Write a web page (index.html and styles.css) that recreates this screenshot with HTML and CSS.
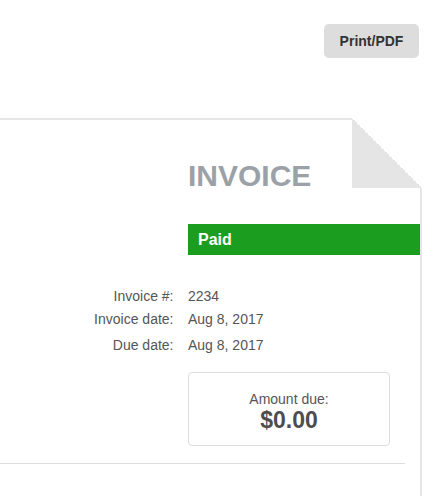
FILE: index.html
```html
<!DOCTYPE html>
<html lang="en">
<head>
<meta charset="utf-8">
<title>Invoice</title>
<link rel="stylesheet" href="styles.css">
</head>
<body>
<div class="toolbar">
  <button class="print-btn" type="button">Print/PDF</button>
</div>
<div class="paper">
  <div class="header">
    <div class="header-left"></div>
    <div class="header-right">
      <h1 class="title">INVOICE</h1>
      <div class="status">Paid</div>
    </div>
  </div>
  <div class="details">
    <div class="label">Invoice #:</div><div class="value">2234</div>
    <div class="label">Invoice date:</div><div class="value">Aug 8, 2017</div>
    <div class="label spaced">Due date:</div><div class="value spaced">Aug 8, 2017</div>
    <div class="amount-cell">
      <div class="amount-box">
        <div class="amount-label">Amount due:</div>
        <div class="amount-value">$0.00</div>
      </div>
    </div>
  </div>
  <div class="divider"></div>
</div>
</body>
</html>
```
FILE: styles.css
```css
html, body {
  margin: 0;
  padding: 0;
  background: #ffffff;
}
body {
  font-family: "Liberation Sans", Arial, sans-serif;
  color: #555555;
  overflow: hidden;
}
.toolbar {
  display: flex;
  justify-content: flex-end;
  padding: 24px 18px 0 0;
}
.print-btn {
  width: 95px;
  height: 34px;
  border: none;
  border-radius: 5px;
  background: #dddddd;
  color: #333333;
  font-family: "Liberation Sans", Arial, sans-serif;
  font-size: 14px;
  font-weight: bold;
  padding: 0;
  line-height: 34px;
}
.paper {
  position: relative;
  width: 620px;
  box-sizing: border-box;
  margin: 60px 0 0 -198px;
  border: 2px solid #e6e6e6;
  padding-bottom: 80px;
}
.paper::after {
  content: "";
  position: absolute;
  top: -2px;
  right: -2px;
  width: 70px;
  height: 70px;
  background: linear-gradient(to bottom left, #ffffff 50%, #e5e5e5 50%);
}
.header {
  display: grid;
  grid-template-columns: 1fr 232px;
  padding-top: 41px;
}
.title {
  margin: 0;
  font-size: 30px;
  line-height: 30px;
  font-weight: bold;
  color: #9ba1a6;
}
.status {
  margin-top: 33px;
  background: #1b9e1f;
  color: #ffffff;
  font-size: 16px;
  font-weight: bold;
  line-height: 19px;
  padding: 6px 10px;
}
.details {
  display: grid;
  grid-template-columns: 1fr 232px;
  margin-top: 30px;
  font-size: 14px;
  line-height: 23px;
}
.label {
  text-align: right;
  padding-right: 14.5px;
}
.spaced {
  margin-top: 3px;
}
.amount-cell {
  grid-column: 2;
  padding-top: 15px;
}
.amount-box {
  width: 202px;
  box-sizing: border-box;
  border: 1px solid #dddddd;
  border-radius: 4px;
  padding: 18px 0 13px;
  text-align: center;
}
.amount-label {
  font-size: 14px;
  line-height: 17px;
}
.amount-value {
  font-size: 23px;
  line-height: 24px;
  font-weight: bold;
  color: #4d4d4d;
}
.divider {
  margin: 17px 15px 0 0;
  border-top: 1px solid #dddddd;
}
```
